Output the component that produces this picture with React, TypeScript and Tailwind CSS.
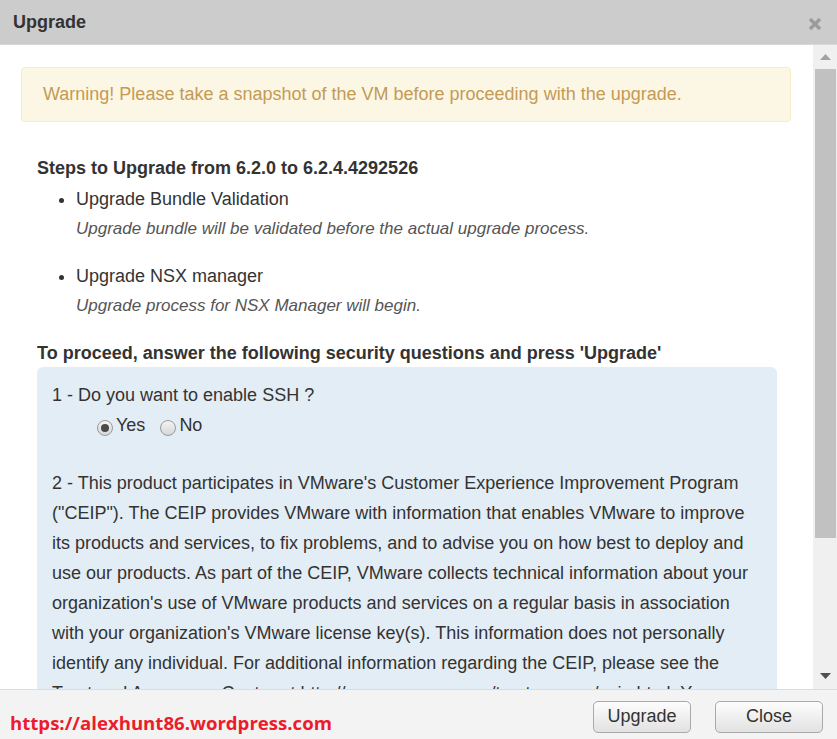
import { useState } from 'react';

const font = "font-['Liberation_Sans',Arial,sans-serif]";

const Radio = ({ checked, onClick }: { checked: boolean; onClick: () => void }) => (
  <span
    onClick={onClick}
    className="inline-flex items-center justify-center w-[16px] h-[16px] rounded-full border border-[#9a9a9a] bg-gradient-to-b from-[#f4f4f4] to-[#d6d6d6] cursor-pointer"
  >
    {checked && <span className="w-[8px] h-[8px] rounded-full bg-[#4a4a4a]" />}
  </span>
);

const App = () => {
  const [ssh, setSsh] = useState(true);

  const ceip = [
    "2 - This product participates in VMware's Customer Experience Improvement Program",
    '("CEIP"). The CEIP provides VMware with information that enables VMware to improve',
    'its products and services, to fix problems, and to advise you on how best to deploy and',
    'use our products. As part of the CEIP, VMware collects technical information about your',
    "organization's use of VMware products and services on a regular basis in association",
    "with your organization's VMware license key(s). This information does not personally",
    'identify any individual. For additional information regarding the CEIP, please see the',
    'Trust and Assurance Center at http://www.vmware.com/trustvmware/ceip.html. You',
  ];

  return (
    <div className={`w-[837px] h-[739px] flex flex-col bg-white text-[#333] ${font}`}>
      {/* Header */}
      <div className="h-[45px] shrink-0 bg-[#cccccc] border-b border-[#d8d8d8] flex items-center justify-between pl-[13px] pr-[15px]">
        <h1 className="text-[18px] font-bold text-[#333]">Upgrade</h1>
        <svg width="14" height="14" viewBox="0 0 14 14" className="mt-[3px]">
          <path d="M2 2 L12 12 M12 2 L2 12" stroke="#9b9b9b" strokeWidth="3.2" strokeLinecap="butt" />
        </svg>
      </div>

      {/* Body */}
      <div className="flex-1 flex min-h-0">
        <div className="flex-1 overflow-hidden pl-[21px] pr-[22px] pt-[22px]">
          <div className="h-[55px] rounded-[4px] bg-[#fcf7e4] border border-[#f8ebca] flex items-center pl-[21px] text-[18px] text-[#c49a55]">
            Warning! Please take a snapshot of the VM before proceeding with the upgrade.
          </div>

          <div className="pl-[16px] mt-[36px]">
            <h2 className="text-[18px] leading-[20px] font-bold">Steps to Upgrade from 6.2.0 to 6.2.4.4292526</h2>
            <ul className="mt-[6px] pl-[39px] list-disc text-[18px]">
              <li className="mb-[17px]">
                <div className="leading-[30px]">Upgrade Bundle Validation</div>
                <div className="leading-[30px] italic text-[17px] text-[#555]">
                  Upgrade bundle will be validated before the actual upgrade process.
                </div>
              </li>
              <li>
                <div className="leading-[30px]">Upgrade NSX manager</div>
                <div className="leading-[30px] italic text-[17px] text-[#555]">
                  Upgrade process for NSX Manager will begin.
                </div>
              </li>
            </ul>

            <h2 className="mt-[22px] text-[18px] leading-[20px] font-bold">
              To proceed, answer the following security questions and press 'Upgrade'
            </h2>

            <div className="mt-[4px] w-[740px] h-[340px] rounded-[6px] bg-[#e3edf5] pl-[15px] pt-[13px] text-[18px] leading-[30px]">
              <div>1 - Do you want to enable SSH ?</div>
              <div className="flex items-center h-[30px] pl-[45px] pt-[6px]">
                <Radio checked={ssh} onClick={() => setSsh(true)} />
                <span className="ml-[3px] -mt-[7px] mr-[15px]">Yes</span>
                <Radio checked={!ssh} onClick={() => setSsh(false)} />
                <span className="ml-[3px] -mt-[7px]">No</span>
              </div>
              <div className="mt-[28px] whitespace-nowrap">
                {ceip.map((line, i) => (
                  <div key={i}>{line}</div>
                ))}
              </div>
            </div>
          </div>
        </div>

        {/* Scrollbar */}
        <div className="w-[24px] shrink-0 bg-[#f0f0f0] flex flex-col items-center">
          <div className="h-[24px] flex items-center justify-center">
            <svg width="11" height="6" viewBox="0 0 11 6">
              <path d="M0 6 L5.5 0 L11 6 Z" fill="#a3a3a3" />
            </svg>
          </div>
          <div className="w-[21px] h-[469px] bg-[#c1c1c1]" />
          <div className="flex-1" />
          <div className="h-[26px] flex items-center justify-center">
            <svg width="11" height="6" viewBox="0 0 11 6">
              <path d="M0 0 L11 0 L5.5 6 Z" fill="#505050" />
            </svg>
          </div>
        </div>
      </div>

      {/* Footer */}
      <div className="h-[50px] shrink-0 bg-[#f3f3f3] border-t border-[#dcdcdc] flex items-center pl-[10px] pr-[14px]">
        <a className="text-[18.6px] font-bold text-[#ec1c2c] font-['Open_Sans',sans-serif] mt-[16px]">
          https://alexhunt86.wordpress.com
        </a>
        <div className="ml-auto flex gap-[24px] mt-[4px]">
          <button className="w-[98px] h-[32px] rounded-[5px] border border-[#a9a9a9] bg-gradient-to-b from-[#fdfdfd] to-[#e2e2e2] text-[18px] text-[#333]">
            Upgrade
          </button>
          <button className="w-[108px] h-[32px] rounded-[5px] border border-[#a9a9a9] bg-gradient-to-b from-[#fdfdfd] to-[#e2e2e2] text-[18px] text-[#333]">
            Close
          </button>
        </div>
      </div>
    </div>
  );
};

export default App;
